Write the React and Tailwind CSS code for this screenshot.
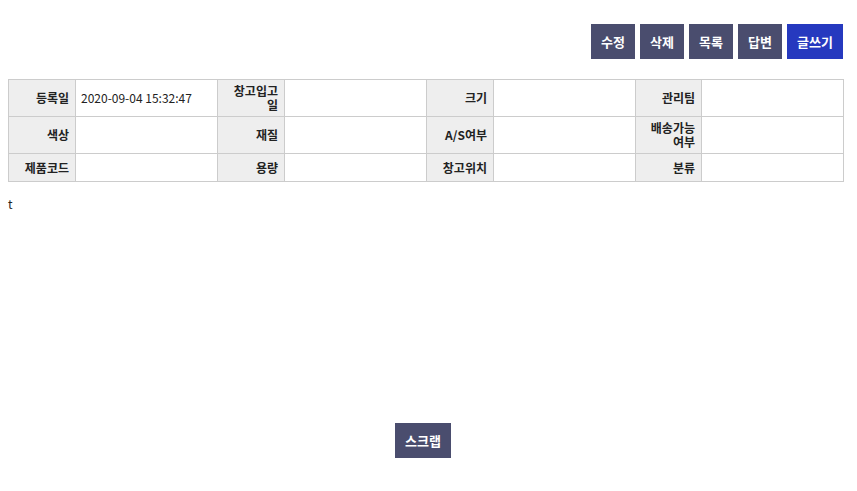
const font = { fontFamily: '"Malgun Gothic", "Noto Sans CJK KR", "Noto Sans", sans-serif' };

const rows = [
  [
    ["등록일", "2020-09-04 15:32:47"],
    ["창고입고일", ""],
    ["크기", ""],
    ["관리팀", ""],
  ],
  [
    ["색상", ""],
    ["재질", ""],
    ["A/S여부", ""],
    ["배송가능여부", ""],
  ],
  [
    ["제품코드", ""],
    ["용량", ""],
    ["창고위치", ""],
    ["분류", ""],
  ],
];

function Btn({ children, blue, wide }) {
  return (
    <button
      className={
        (wide ? "w-[56px] " : "w-[44px] ") +
        (blue ? "bg-[#2639bf] " : "bg-[#4a4d6e] ") +
        "h-[35px] text-white text-[13px] font-bold"
      }
    >
      {children}
    </button>
  );
}

export default function App() {
  return (
    <div className="w-[857px] h-[491px] bg-white pl-[8px] pr-[14px] pt-[24px] text-[#222]" style={font}>
      {/* top buttons */}
      <div className="flex justify-end gap-[5px]">
        <Btn>수정</Btn>
        <Btn>삭제</Btn>
        <Btn>목록</Btn>
        <Btn>답변</Btn>
        <Btn blue wide>글쓰기</Btn>
      </div>

      {/* info table */}
      <table className="mt-[20px] w-[835px] border-collapse table-fixed text-[12px] leading-[14px]">
        <colgroup>
          <col className="w-[67px]" />
          <col className="w-[142px]" />
          <col className="w-[67px]" />
          <col className="w-[142px]" />
          <col className="w-[67px]" />
          <col className="w-[142px]" />
          <col className="w-[66px]" />
          <col className="w-[142px]" />
        </colgroup>
        <tbody>
          {rows.map((row, i) => (
            <tr key={i} className={i === 2 ? "h-[28px]" : "h-[37px]"}>
              {row.map(([label, value]) => (
                <>
                  <th
                    key={label}
                    className="border border-[#cccccc] bg-[#eeeeee] font-bold text-right pl-[6px] pr-[6px] py-[3px] align-middle text-[#222]"
                  >
                    {label}
                  </th>
                  <td key={label + "v"} className="border border-[#cccccc] px-[5px] align-middle text-[#222]">
                    {value}
                  </td>
                </>
              ))}
            </tr>
          ))}
        </tbody>
      </table>

      {/* content */}
      <div className="h-[241px] pt-[15px] text-[12px] leading-[14px]">t</div>

      <div className="flex justify-center pr-[5px]">
        <Btn wide>스크랩</Btn>
      </div>
    </div>
  );
}
